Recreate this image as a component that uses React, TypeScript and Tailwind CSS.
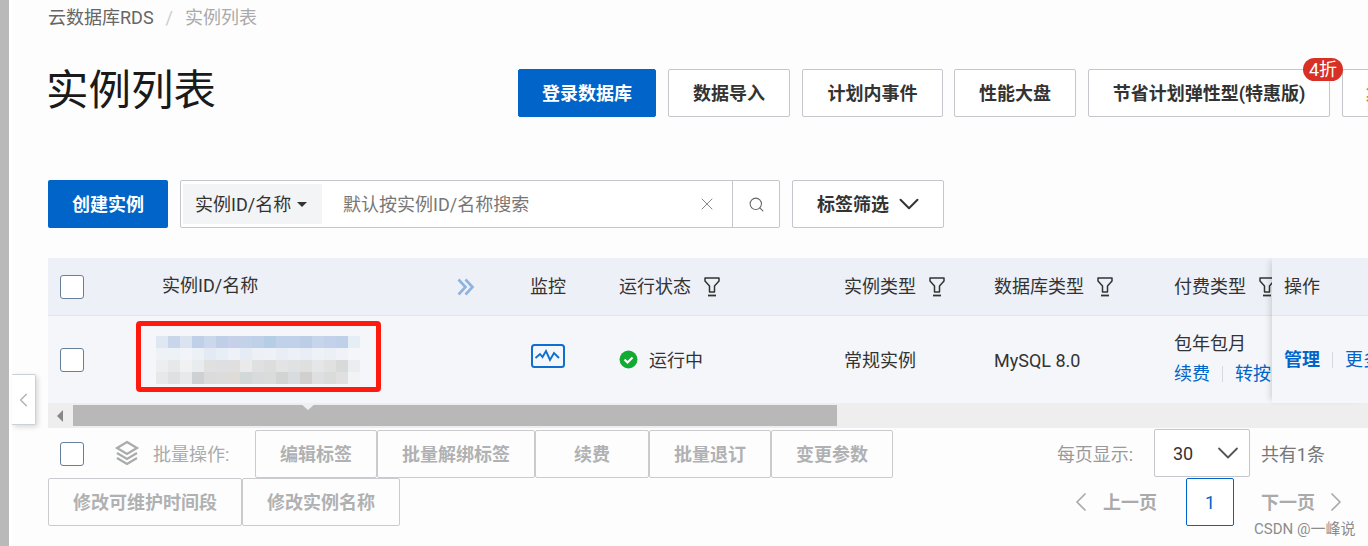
import { ChevronDown, ChevronLeft, ChevronRight, Search, X } from "lucide-react";

const mosaic = [
  ["#dfe7f2", "#c9d6ea", "#dbe3f0", "#c0d0e8", "#cbd7ea", "#bfcfe8", "#c6d0e8", "#c3d1e9", "#bfd0e9", "#b6cde6", "#c0d2ea", "#c0d2ea", "#bccde6", "#c6d5ec", "#c3d2ea", "#bfd0e9", "#e6eef5"],
  ["#eef2f7", "#edf2f6", "#f1f4f8", "#ecf1f6", "#e3eaf4", "#e8eef6", "#eef1f7", "#e6ecf5", "#edf1f6", "#eef1f6", "#e9eef6", "#edf1f7", "#e9eef6", "#eef2f7", "#ebeff6", "#eff2f6", "#f4f6f9"],
  ["#edeeef", "#e7e8ea", "#f0f1f0", "#e9ecee", "#e0e0e1", "#dedfe0", "#dfdfe0", "#e9eae9", "#dfe0e1", "#dcdddd", "#e3e3e4", "#e0e1e2", "#dedfdf", "#e5e6e7", "#e0e1e0", "#d8d9d9", "#ebeef0"],
  ["#e7e8e9", "#dfe0e1", "#e8e9ea", "#cfd0d1", "#dadbda", "#dcdcda", "#dedbd9", "#d2d8d8", "#d9dadb", "#dadbdb", "#d2d3d3", "#d9dcde", "#d2cfcf", "#dedfe0", "#dadbdb", "#dfe0df", "#f1f3f4"],
];

function Funnel() {
  return (
    <svg width="16" height="20" viewBox="0 0 16 20" fill="none" stroke="#333" strokeWidth="1.5" className="shrink-0">
      <path d="M1 1h14v3l-4.500 5v6h-5V9L1 4z" strokeLinejoin="round" />
      <path d="M4 18.500h8" strokeWidth="1.800" />
    </svg>
  );
}

function Check({ className = "" }: { className?: string }) {
  return <span className={"block w-6 h-6 shrink-0 bg-white border border-[#66809c] rounded-[3px] " + className} />;
}

function HeadButton({ w, label, primary }: { w: string; label: string; primary?: boolean }) {
  return (
    <button
      className={
        "h-12 shrink-0 rounded-[2px] text-[18px] font-bold border " +
        w +
        (primary ? " bg-[#0064c8] border-[#0064c8] text-white" : " bg-white border-[#c4c6cc] text-[#333]")
      }
    >
      {label}
    </button>
  );
}

function BatchButton({ w, label }: { w: string; label: string }) {
  return (
    <button className={"h-12 shrink-0 rounded-[2px] border border-[#c9cbcf] bg-[#fdfdfd] text-[18px] font-bold text-[#b0b1b2] " + w}>
      {label}
    </button>
  );
}

function HeadCell({ label }: { label: string }) {
  return (
    <div className="flex items-center gap-[13px] whitespace-nowrap overflow-hidden">
      <span>{label}</span>
      <Funnel />
    </div>
  );
}

export default function App() {
  return (
    <div
      className="flex w-[1368px] h-[546px] overflow-hidden bg-[#fdfdfd] text-[18px] text-[#333]"
      style={{ fontFamily: 'Roboto, "Noto Sans CJK SC", sans-serif' }}
    >
      <div className="w-3 shrink-0 bg-[#b9b9b9] border-r-[3px] border-r-white" />
      <div className="relative flex-1 min-w-0 pl-9">
        <div className="flex items-center h-[34px] text-[#666] whitespace-nowrap">
          <span>云数据库RDS</span>
          <span className="mx-3 text-[#ccc]">/</span>
          <span className="text-[#aaa]">实例列表</span>
        </div>

        <div className="flex items-center h-12 mt-[35px] gap-3">
          <h1 className="w-[458px] shrink-0 mt-[-3px] indent-[-2px] text-[42.5px] font-normal leading-none text-[#1a1a1a]">实例列表</h1>
          <HeadButton w="w-[138px]" label="登录数据库" primary />
          <HeadButton w="w-[122px]" label="数据导入" />
          <HeadButton w="w-[141px]" label="计划内事件" />
          <HeadButton w="w-[122px] ml-[-1px]" label="性能大盘" />
          <div className="relative shrink-0">
            <HeadButton w="w-[242px]" label="节省计划弹性型(特惠版)" />
            <span className="absolute left-[215px] top-[-11px] flex items-center justify-center w-10 h-[23px] rounded-full bg-[#d93026] text-white text-[18px] leading-none">
              4折
            </span>
          </div>
          <button className="h-12 w-[120px] shrink-0 rounded-[2px] border border-[#c4c6cc] bg-white pl-[23px] text-left text-[18px] font-bold text-[#c98a2b]">
            集
          </button>
        </div>

        <div className="flex items-center h-12 mt-[63px]">
          <button className="w-[120px] h-12 pt-px shrink-0 rounded-[2px] bg-[#0064c8] text-white font-bold">创建实例</button>
          <div className="flex items-center w-[600px] h-12 ml-3 shrink-0 bg-white border border-[#c4c6cc] rounded-[2px]">
            <div className="flex items-center w-[139px] h-[40px] ml-[2px] pl-3 pt-px gap-[6px] bg-[#f3f4f6] shrink-0 whitespace-nowrap">
              <span>实例ID/名称</span>
              <span className="w-0 h-0 border-x-[5px] border-x-transparent border-t-[5px] border-t-[#333]" />
            </div>
            <span className="flex-1 pl-[21px] pt-px text-[#777] whitespace-nowrap">默认按实例ID/名称搜索</span>
            <X size={20} strokeWidth={1.2} className="mr-[15px] text-[#888]" />
            <div className="flex items-center justify-center w-[47px] h-full border-l border-l-[#c4c6cc]">
              <Search size={17} strokeWidth={1.5} className="text-[#666]" />
            </div>
          </div>
          <button className="flex items-center w-[152px] h-12 ml-3 pl-6 shrink-0 bg-white border border-[#c4c6cc] rounded-[2px] font-bold">
            <span className="pt-px">标签筛选</span>
            <ChevronDown size={34} strokeWidth={1.4} className="ml-[3px]" />
          </button>
        </div>

        <div className="relative mt-[30px] overflow-hidden">
          <div className="grid grid-cols-[114px_368px_89px_225px_150px_180px_98px_96px] items-center h-[58px] bg-[#edf0f6] border-b border-b-[#e1e4ea]">
            <Check className="ml-3" />
            <div className="flex items-center justify-between pr-[55px] whitespace-nowrap">
              <span className="mt-[-2px]">实例ID/名称</span>
              <svg width="18" height="18" viewBox="0 0 18 18" fill="none" stroke="#8fb3e0" strokeWidth="2.600">
                <path d="M1.500 1.500L8.500 9l-7 7.500M8.500 1.500l7 7.500-7 7.500" />
              </svg>
            </div>
            <span className="whitespace-nowrap">监控</span>
            <HeadCell label="运行状态" />
            <HeadCell label="实例类型" />
            <HeadCell label="数据库类型" />
            <HeadCell label="付费类型" />
            <span />
          </div>

          <div className="grid grid-cols-[114px_368px_89px_225px_150px_180px_98px_96px] items-center h-[87px] bg-[#f5f6fa]">
            <Check className="ml-3" />
            <span />
            <svg width="34" height="24" viewBox="0 0 34 24" fill="none" stroke="#0f6fd0" className="ml-[1px] mt-[-8px]">
              <rect x="1" y="1" width="32" height="22" rx="2.500" strokeWidth="2" />
              <path d="M4.500 14L9 10l2.500 3L15 7l4 9 4-7 5 5" strokeWidth="1.900" />
            </svg>
            <div className="flex items-center gap-[11px] whitespace-nowrap">
              <svg width="19" height="19" viewBox="0 0 19 19">
                <circle cx="9.500" cy="9.500" r="9" fill="#12ab32" />
                <path d="M5.500 9.500l3 3 5-5" stroke="#fff" strokeWidth="2.200" fill="none" />
              </svg>
              <span className="mt-px">运行中</span>
            </div>
            <span className="mt-[2px] whitespace-nowrap">常规实例</span>
            <span className="mt-[2px] whitespace-nowrap">MySQL 8.0</span>
            <div className="overflow-hidden whitespace-nowrap leading-[30px] mt-[-2px]">
              <div>包年包月</div>
              <div className="flex items-center text-[#0064c8]">
                <span>续费</span>
                <span className="w-px h-4 mx-3 shrink-0 bg-[#d5d8de]" />
                <span>转按量</span>
              </div>
            </div>
            <span />
          </div>

          <div className="absolute right-0 top-0 w-[96px] h-[145px] bg-[#f5f6fa] shadow-[-5px_0_6px_-3px_rgba(0,0,0,0.14)]">
            <div className="flex items-center h-[58px] pl-3 bg-[#edf0f6] border-b border-b-[#e1e4ea]">操作</div>
            <div className="flex items-center h-[87px] pl-3 whitespace-nowrap text-[#0064c8]">
              <span className="font-bold">管理</span>
              <span className="w-px h-4 mx-3 shrink-0 bg-[#d5d8de]" />
              <span>更多</span>
            </div>
          </div>

          <div className="absolute left-[88px] top-[63px] w-[245px] h-[71px] rounded-[4px] border-[5px] border-[#ff1a0d]">
            <svg width="204" height="48" viewBox="0 0 204 48" className="absolute left-[15px] top-[10px]">
              {mosaic.map((row, y) =>
                row.map((c, x) => <rect key={x + "-" + y} x={x * 12} y={y * 12} width="12" height="12" fill={c} />),
              )}
            </svg>
          </div>

          <div className="flex items-center h-[25px] bg-[#eeeeee]">
            <span className="ml-[9px] w-0 h-0 border-y-[6px] border-y-transparent border-r-[6px] border-r-[#888]" />
            <span className="block w-[764px] h-[21px] ml-[10px] bg-[#b8b8b8]" />
          </div>
          <span className="absolute left-[252px] top-[145px] w-0 h-0 border-x-[8px] border-x-transparent border-t-[7px] border-t-[#eef0f3]" />
        </div>

        <div className="flex items-center justify-between h-12 mt-[2px] pr-[43px] text-[#999]">
          <div className="flex items-center">
            <Check className="ml-3" />
            <svg width="26" height="28" viewBox="0 0 26 28" fill="none" stroke="#a9aaab" strokeWidth="2.200" className="ml-[30px] mr-[13px]">
              <path d="M13 2l10 6-10 6-10-6z" />
              <path d="M3 13l10 6 10-6M3 18l10 6 10-6" />
            </svg>
            <span className="w-[102px] shrink-0 text-[#aaa] whitespace-nowrap">批量操作:</span>
            <BatchButton w="w-[122px]" label="编辑标签" />
            <BatchButton w="w-[158px]" label="批量解绑标签" />
            <BatchButton w="w-[114px]" label="续费" />
            <BatchButton w="w-[122px]" label="批量退订" />
            <BatchButton w="w-[122px]" label="变更参数" />
          </div>
          <div className="flex items-center whitespace-nowrap">
            <span className="w-20 shrink-0">每页显示:</span>
            <div className="flex items-center justify-between w-24 h-12 ml-[17px] mt-[-2px] pl-[18px] pr-[3px] bg-white border border-[#c4c6cc] rounded-[2px] text-[#333]">
              <span>30</span>
              <ChevronDown size={36} strokeWidth={1.2} className="text-[#555]" />
            </div>
            <span className="ml-[11px] text-[#777]">共有1条</span>
          </div>
        </div>

        <div className="flex items-center justify-between h-12 pr-4">
          <div className="flex items-center">
            <BatchButton w="w-[194px]" label="修改可维护时间段" />
            <BatchButton w="w-[158px]" label="修改实例名称" />
          </div>
          <div className="flex items-center text-[#aaa] font-bold">
            <ChevronLeft size={32} strokeWidth={1.3} />
            <span className="ml-[6px]">上一页</span>
            <span className="flex items-center justify-center w-12 h-12 ml-[29px] mr-[27px] rounded-[2px] border border-[#0064c8] bg-white text-[#0064c8] font-normal">
              1
            </span>
            <span>下一页</span>
            <ChevronRight size={32} strokeWidth={1.3} className="ml-[5px]" />
          </div>
        </div>

        <span className="absolute left-[1242px] top-[519px] text-[15px] leading-5 text-[#8c8c8c] whitespace-nowrap">CSDN @一峰说</span>

        <button className="absolute left-0 top-[374px] flex items-center justify-center w-6 h-[51px] bg-white border border-l-0 border-[#ccd0d8] rounded-r-[2px] shadow-[2px_2px_5px_rgba(0,0,0,0.15)]">
          <ChevronLeft size={34} strokeWidth={1.4} className="text-[#b0b0b0]" />
        </button>
      </div>
    </div>
  );
}
